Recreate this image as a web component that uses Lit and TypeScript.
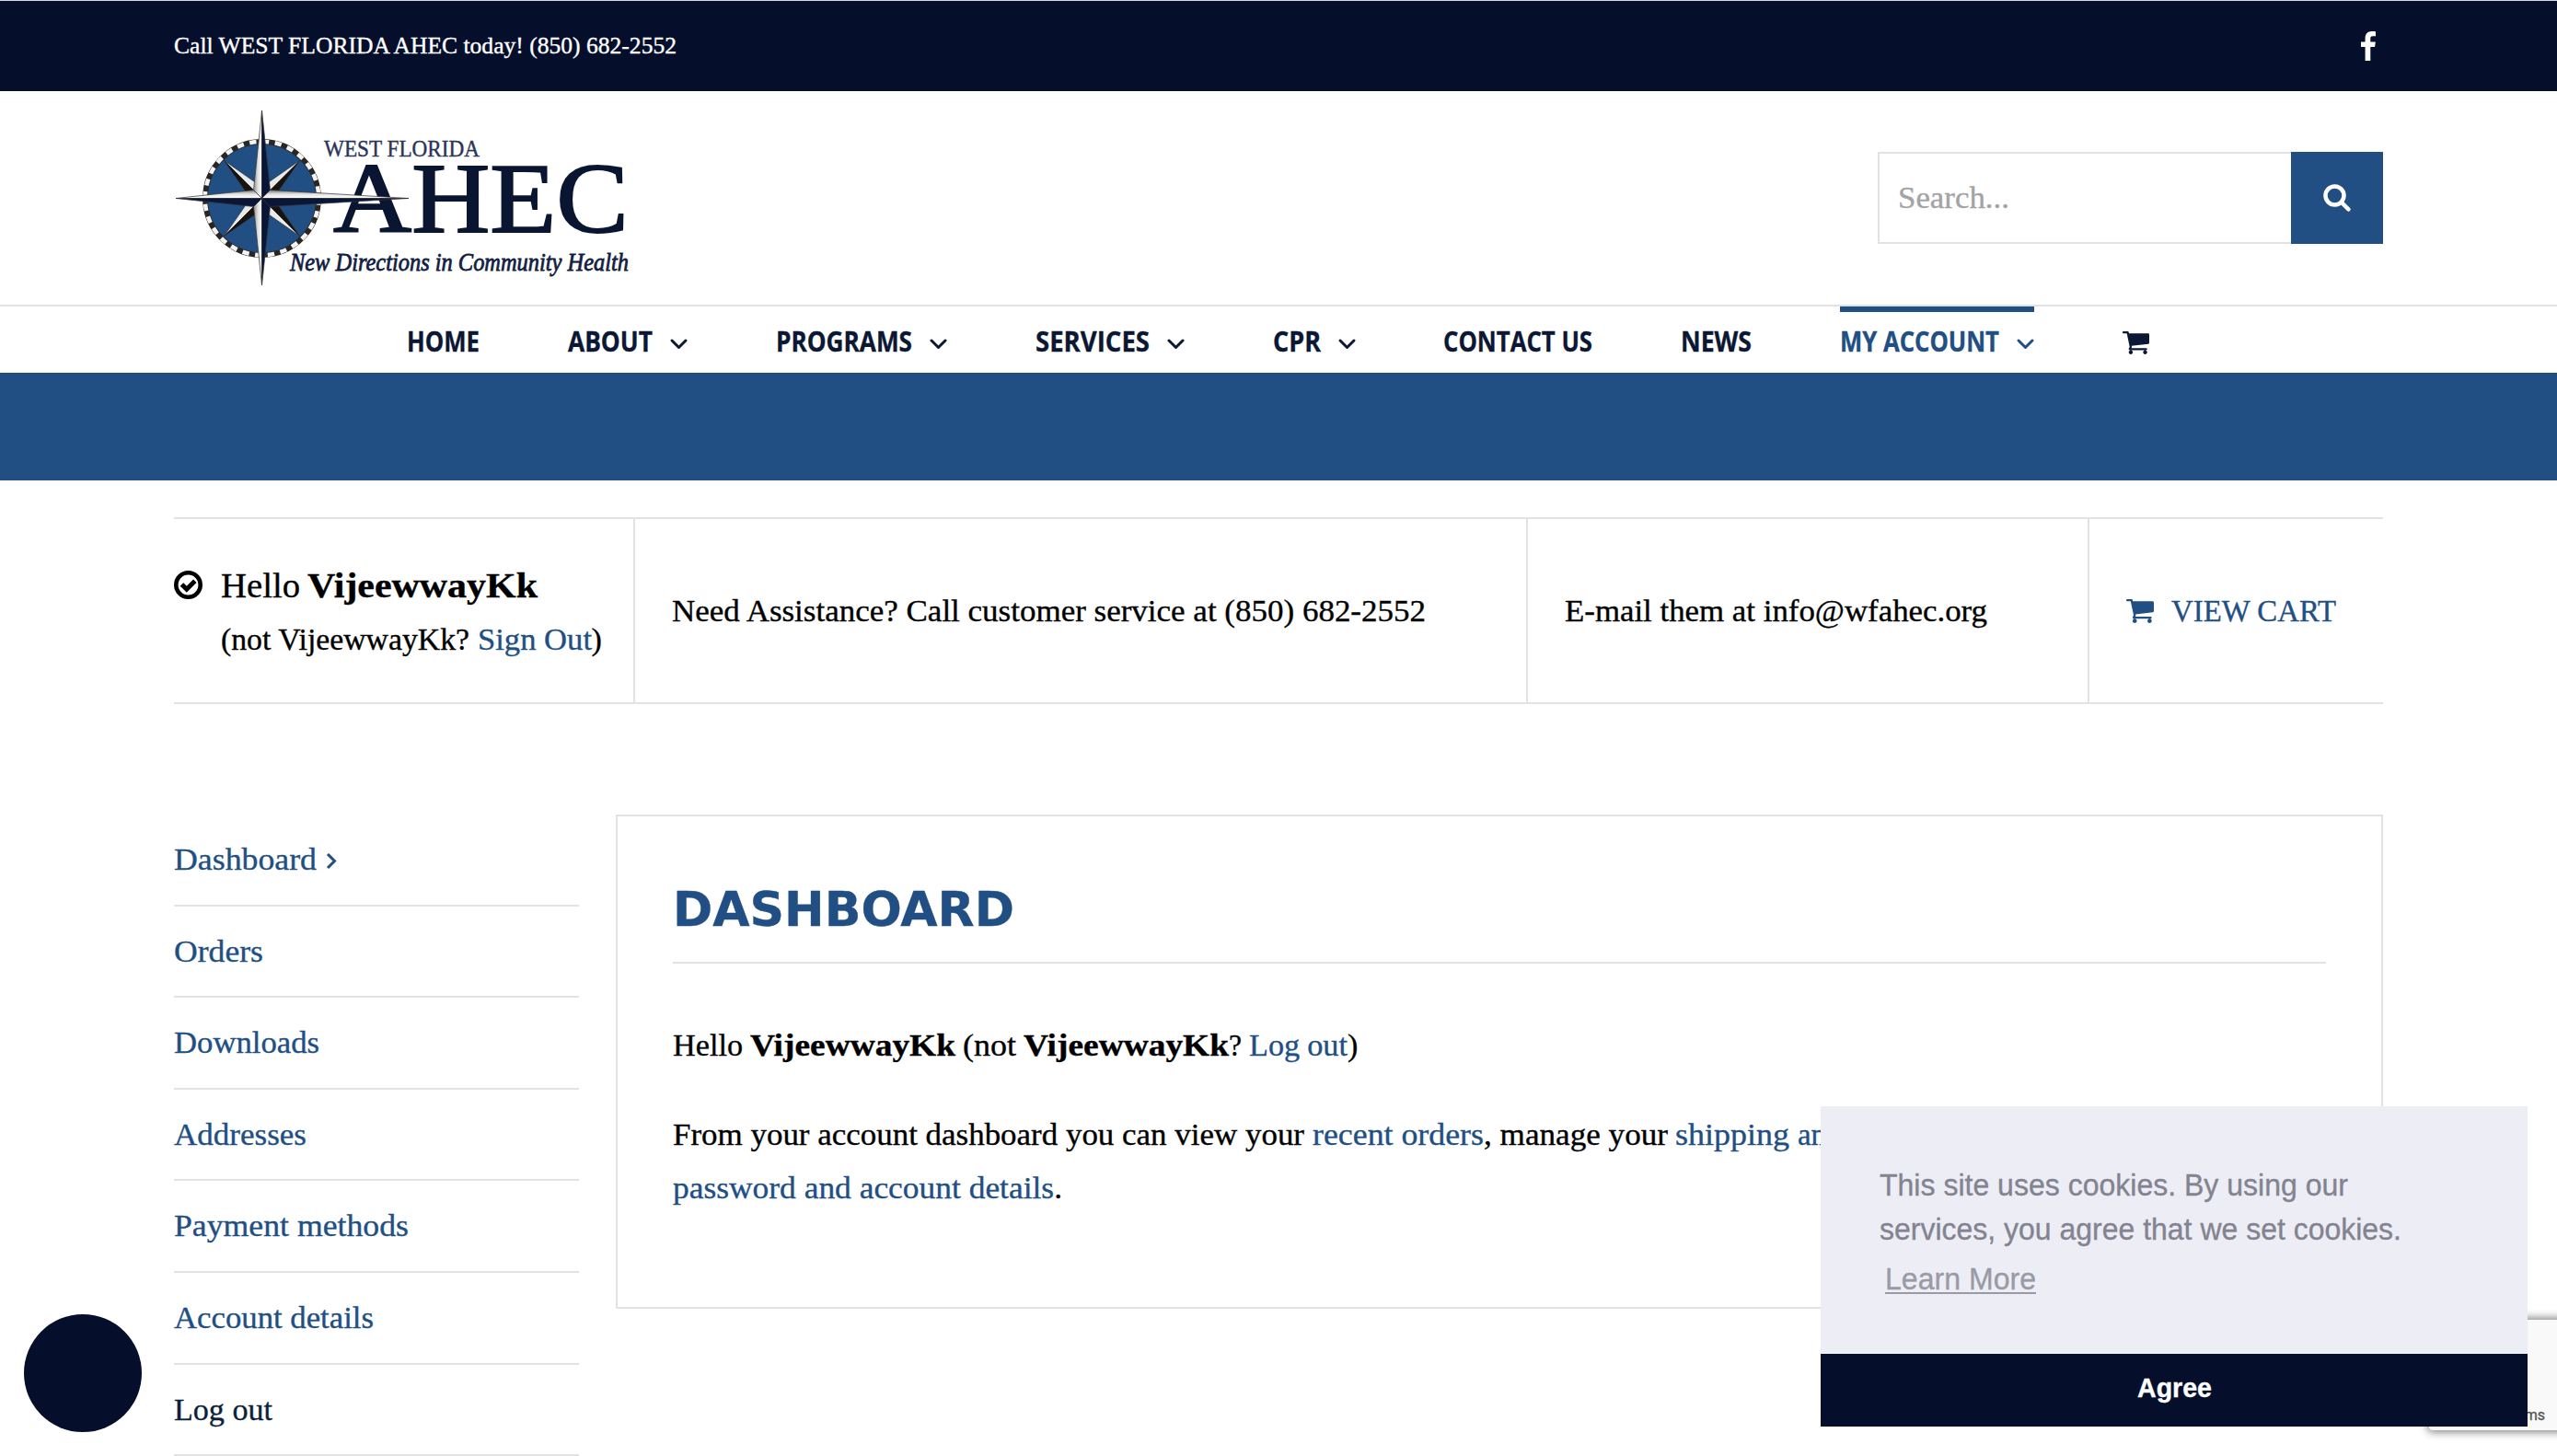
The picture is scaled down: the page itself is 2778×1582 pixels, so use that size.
import { LitElement, html, css, svg } from "lit";
import { customElement, property, state } from "lit/decorators.js";

const CHEVRON = svg`<path d="M2 2 L9.5 9.5 L17 2" fill="none" stroke="currentColor" stroke-width="3" stroke-linecap="round" stroke-linejoin="round"/>`;
const CART = svg`<path fill="currentColor" d="M704 1536q0 52-38 90t-90 38-90-38-38-90 38-90 90-38 90 38 38 90zm896 0q0 52-38 90t-90 38-90-38-38-90 38-90 90-38 90 38 38 90zm128-1088v512q0 24-16.500 42.500t-40.500 21.500l-1044 122q13 60 13 70 0 16-24 64h920q26 0 45 19t19 45-19 45-45 19h-1024q-26 0-45-19t-19-45q0-11 8-31.500t16-36 21.500-40 15.500-29.500l-177-823h-204q-26 0-45-19t-19-45 19-45 45-19h256q16 0 28.500 6.500t19.500 15.500 13 24.500 8 26 5.500 29.500 4.500 26h1201q26 0 45 19t19 45z"/>`;

/** Inline text run stretched horizontally to a given pixel width. */
@customElement("fit-text")
export class FitText extends LitElement {
  static styles = css`
    :host { display: inline-block; white-space: nowrap; }
    .run { display: inline-block; transform-origin: 0 50%; }
  `;
  @property({ type: Number }) w = 100;
  @state() private natural = 0;
  firstUpdated() {
    const el = this.renderRoot.querySelector(".run") as HTMLElement;
    this.natural = el.getBoundingClientRect().width;
  }
  render() {
    const s = this.natural ? this.w / this.natural : 1;
    return html`<span class="run" style=${`transform:scaleX(${s});margin-right:${this.natural ? this.w - this.natural : 0}px`}><slot></slot></span>`;
  }
}

const NAV = [
  { t: "HOME", w: 79 },
  { t: "ABOUT", w: 92, sub: true },
  { t: "PROGRAMS", w: 148, sub: true },
  { t: "SERVICES", w: 124, sub: true },
  { t: "CPR", w: 52, sub: true },
  { t: "CONTACT US", w: 162 },
  { t: "NEWS", w: 77 },
  { t: "MY ACCOUNT", w: 173, sub: true, on: true },
];

const SIDE = [
  { t: "Dashboard", w: 155, on: true },
  { t: "Orders", w: 97 },
  { t: "Downloads", w: 158 },
  { t: "Addresses", w: 144 },
  { t: "Payment methods", w: 255 },
  { t: "Account details", w: 217 },
  { t: "Log out", w: 107, dark: true },
];

@customElement("app-root")
export class AppRoot extends LitElement {
  static styles = css`
    :host {
      display: block; height: 1582px; overflow: hidden; position: relative; background: #fff;
      font-family: "Liberation Serif", "Times New Roman", serif; font-size: 34px; line-height: 58px; color: #000;
      -webkit-text-stroke: 0.35px currentColor;
    }
    * { box-sizing: border-box; }
    svg { display: block; overflow: visible; -webkit-text-stroke: 0; }
    a { color: #214f84; -webkit-text-stroke-color: #214f84; text-decoration: none; }
    .wrap { width: 2400px; margin: 0 auto; }
    .top { border-top: 1px solid #d9dade; background: #050f2c; color: #fff; height: 99px; font-size: 25.4px; }
    .top .wrap { display: flex; align-items: center; justify-content: space-between; height: 98px; }
    .call { padding-bottom: 2px; }
    .fb { padding-right: 8px; }
    .head { height: 234px; border-bottom: 2px solid #e2e2e2; }
    .head .wrap { height: 232px; display: flex; align-items: center; justify-content: space-between; }
    .logo { padding-top: 8px; }
    .search { display: flex; width: 549px; height: 100px; }
    .field { flex: 1; border: 2px solid #e2e2e2; border-right: 0; padding: 19px 0 0 20px; color: #a3a3a5; }
    .go { width: 100px; background: #214f84; display: grid; place-items: center; }
    .nav { height: 72px; display: flex; gap: 95.900px; padding-left: 442px; color: #0b1733;
      font-family: "Open Sans", "Noto Sans", sans-serif; font-weight: 700; font-size: 31px; line-height: 63px; }
    .item { display: flex; gap: 19px; border-top: 6px solid transparent; }
    .item.on { border-color: #214f84; color: #214f84; }
    .item .chev { margin-top: 29px; }
    .item.cart { padding-top: 21px; }
    .band { height: 117px; background: #214f84; }
    .user { margin-top: 40px; height: 203px; border-top: 2px solid #e2e2e2; border-bottom: 2px solid #e2e2e2; display: flex; }
    .cell { display: flex; align-items: center; padding-left: 40px; border-left: 2px solid #e2e2e2; }
    .cell.hi { width: 499px; padding: 0; border: 0; align-items: flex-start; }
    .hi .ok { padding-top: 56px; width: 51px; }
    .hi .who { padding-top: 43px; }
    .big { font-size: 38px; line-height: 59px; word-spacing: -2px; }
    .help { width: 970px; } .mail { width: 610px; } .view { gap: 19px; color: #214f84; }
    .main { margin-top: 120px; display: flex; justify-content: space-between; align-items: flex-start; }
    .side { width: 440px; }
    .row { height: 99.600px; border-bottom: 2px solid #e2e2e2; padding-top: 20px; display: flex; color: #214f84; gap: 10px; }
    .row.dark { color: #0b1f3c; }
    .row .arr { margin-top: 21px; }
    .card { width: 1920px; height: 537px; border: 2px solid #e2e2e2; padding: 0 60px; }
    .title { margin: 54px 0 0; height: 106px; border-bottom: 2px solid #e2e2e2; color: #214f84;
      font-family: "DejaVu Sans", Verdana, sans-serif; font-weight: 700; font-size: 52px; line-height: 95px; }
    .para { margin: 0; padding-top: 60px; white-space: nowrap; word-spacing: -0.5px; }
    .para + .para { padding-top: 39px; word-spacing: 0; }
    .dot { position: absolute; left: 26px; top: 1428px; width: 128px; height: 128px; border-radius: 50%; background: #050f2c; }
    .captcha { position: absolute; left: 2639px; top: 1434px; width: 512px; height: 120px; background: #f9f9f9; border-radius: 4px;
      box-shadow: 0 0 10px 2px gray; font: 16px/20px Roboto, sans-serif; color: #555; padding: 94px 0 0 17px; }
    .cookie { position: absolute; left: 1978px; top: 1202px; width: 768px; height: 348px; background: #edeef5; display: flex; flex-direction: column;
      font-family: "Liberation Sans", Arial, sans-serif; font-size: 32.500px; line-height: 48px; color: #838391; -webkit-text-stroke-color: #838391; }
    .msg { height: 269px; padding: 62px 0 0 64px; }
    .more { margin: 6px 0 0 6px; color: #9a9aa6; -webkit-text-stroke-color: #9a9aa6; display: block; }
    .more u { text-decoration: underline; text-decoration-thickness: 2px; text-underline-offset: 3px; text-decoration-skip-ink: none; }
    .agree { height: 79px; background: #050f2c; color: #fff; -webkit-text-stroke-color: #fff; font-weight: 700; font-size: 29px; display: flex; justify-content: center; line-height: 74px; }
  `;

  private logo() {
    const cx = 95.5, cy = 96.5;
    const diag = [45, 135, 225, 315].map((a) => svg`
      <g transform="rotate(${a} ${cx} ${cy})" stroke="#2a2a2a" stroke-width=".6">
        <path d="M${cx} ${cy - 58} L${cx + 7.5} ${cy - 16} L${cx} ${cy} Z" fill=${a === 45 ? "#17130f" : "#e9e9e9"}/>
        <path d="M${cx} ${cy - 58} L${cx - 7.5} ${cy - 16} L${cx} ${cy} Z" fill=${a === 45 ? "#e9e9e9" : "#17130f"}/>
      </g>`);
    return html`<svg class="logo" width="500" height="208" viewBox="0 0 500 200">
      <defs>
        <linearGradient id="gl" x1="0" x2="1" y1="0" y2="0"><stop offset="0" stop-color="#8a8a8a"/><stop offset=".5" stop-color="#ddd"/><stop offset="1" stop-color="#fff"/></linearGradient>
        <linearGradient id="gt" x1="0" x2="0" y1="0" y2="1"><stop offset="0" stop-color="#777"/><stop offset=".5" stop-color="#e4e4e4"/><stop offset="1" stop-color="#fff"/></linearGradient>
      </defs>
      <g fill="#0a1631" font-family="Liberation Serif, serif">
        <text x="163" y="51" font-size="24.500" textLength="169" lengthAdjust="spacingAndGlyphs" fill="#2a3557" stroke="#2a3557" stroke-width=".4">WEST FLORIDA</text>
        <text x="173" y="133" font-size="108" textLength="321" lengthAdjust="spacingAndGlyphs" stroke="#0a1631" stroke-width="1.800">AHEC</text>
      </g>
      <circle cx=${cx} cy=${cy} r="61.500" fill="#214f84" stroke="#2a2723" stroke-width="5.800"/>
      <circle cx=${cx} cy=${cy} r="61.800" fill="none" stroke="#f4f4f4" stroke-width="4.600" stroke-dasharray="7.300 6.568"/>
      ${diag}
      <g stroke="#333" stroke-width=".7">
        <path d="M${cx} 1 L${cx - 9} ${cy - 9} L${cx} ${cy} Z" fill="url(#gl)"/>
        <path d="M${cx} 1 L${cx + 9} ${cy - 9} L${cx} ${cy} Z" fill="#0a1638"/>
        <path d="M${cx} 191 L${cx - 9} ${cy + 9} L${cx} ${cy} Z" fill="url(#gl)"/>
        <path d="M${cx} 191 L${cx + 9} ${cy + 9} L${cx} ${cy} Z" fill="#0a1638"/>
        <path d="M2 ${cy} L${cx - 9} ${cy - 9} L${cx} ${cy} Z" fill="url(#gt)"/>
        <path d="M2 ${cy} L${cx - 9} ${cy + 9} L${cx} ${cy} Z" fill="#0a1638"/>
        <path d="M255 ${cy} L${cx + 9} ${cy - 9} L${cx} ${cy} Z" fill="url(#gt)"/>
        <path d="M255 ${cy} L${cx + 9} ${cy + 9} L${cx} ${cy} Z" fill="#0a1638"/>
      </g>
      <text x="126" y="175" font-family="Liberation Serif, serif" font-style="italic" font-size="28" textLength="368" lengthAdjust="spacingAndGlyphs" fill="#111d42" stroke="#111d42" stroke-width=".8">New Directions in Community Health</text>
    </svg>`;
  }

  render() {
    return html`
      <div class="top"><div class="wrap">
        <fit-text class="call" w="546">Call WEST FLORIDA AHEC today! (850) 682-2552</fit-text>
        <svg class="fb" width="24" height="32" viewBox="0 0 16 32"><path fill="#fff" d="M16 .3v5h-3c-2.300 0-2.700 1.100-2.700 2.700v3.500h5.500l-.7 5.600h-4.800V32H4.600V17.100H0v-5.600h4.600v-4C4.600 2.700 7.500 0 11.800 0c2 0 3.700.2 4.200.3z"/></svg>
      </div></div>
      <div class="head"><div class="wrap">
        ${this.logo()}
        <div class="search">
          <div class="field"><fit-text w="121">Search...</fit-text></div>
          <div class="go"><svg width="30" height="30" viewBox="0 0 30 30" fill="none" stroke="#fff" stroke-width="4.500" stroke-linecap="round"><circle cx="12.500" cy="12.500" r="10"/><path d="M20 20l7.500 7.500"/></svg></div>
        </div>
      </div></div>
      <div class="nav">
        ${NAV.map((n) => html`<div class="item ${n.on ? "on" : ""}"><fit-text w=${n.w}>${n.t}</fit-text>${n.sub ? html`<svg class="chev" width="19" height="12" viewBox="0 0 19 12">${CHEVRON}</svg>` : ""}</div>`)}
        <div class="item cart"><svg width="29" height="25" viewBox="64 256 1664 1408" preserveAspectRatio="none">${CART}</svg></div>
      </div>
      <div class="band"></div>
      <div class="wrap user">
        <div class="cell hi">
          <div class="ok"><svg width="31" height="31" viewBox="0 0 31 31"><circle cx="15.500" cy="15.500" r="13.200" fill="none" stroke="#000" stroke-width="4.600"/><path d="M8.500 15l5.300 5.300 9-9" fill="none" stroke="#000" stroke-width="5"/></svg></div>
          <div class="who">
            <div class="big"><fit-text w="86">Hello</fit-text> <b><fit-text w="250">VijeewwayKk</fit-text></b></div>
            <div><fit-text w="270">(not VijeewwayKk?</fit-text> <a><fit-text w="124">Sign Out</fit-text></a>)</div>
          </div>
        </div>
        <div class="cell help"><fit-text w="819">Need Assistance? Call customer service at (850) 682-2552</fit-text></div>
        <div class="cell mail"><fit-text w="459">E-mail them at info@wfahec.org</fit-text></div>
        <div class="cell view"><svg width="30" height="26" viewBox="64 256 1664 1408" preserveAspectRatio="none">${CART}</svg><fit-text w="179">VIEW CART</fit-text></div>
      </div>
      <div class="wrap main">
        <div class="side">
          ${SIDE.map((s) => html`<div class="row ${s.dark ? "dark" : ""}"><fit-text w=${s.w}>${s.t}</fit-text>${s.on ? html`<svg class="arr" width="12" height="19" viewBox="0 0 12 19"><path d="M2 2l7.500 7.500L2 17" fill="none" stroke="currentColor" stroke-width="3"/></svg>` : ""}</div>`)}
        </div>
        <div class="card">
          <h2 class="title"><fit-text w="371">DASHBOARD</fit-text></h2>
          <p class="para"><fit-text w="76">Hello</fit-text> <b><fit-text w="223">VijeewwayKk</fit-text></b> <fit-text w="58">(not</fit-text> <b><fit-text w="223">VijeewwayKk</fit-text></b><fit-text w="14">?</fit-text> <a><fit-text w="107">Log out</fit-text></a>)</p>
          <p class="para"><fit-text w="686">From your account dashboard you can view your</fit-text> <a><fit-text w="186">recent orders</fit-text></a><fit-text w="200">, manage your</fit-text> <a><fit-text w="124">shipping</fit-text></a> <fit-text w="340"><a>and billing addresses</a>, and</fit-text><br>
          <fit-text w="423"><a>password and account details</a>.</fit-text></p>
        </div>
      </div>
      <div class="dot"></div>
      <div class="captcha"><fit-text w="109">Privacy - Terms</fit-text></div>
      <div class="cookie">
        <div class="msg">
          <fit-text w="509">This site uses cookies. By using our</fit-text><br>
          <fit-text w="567">services, you agree that we set cookies.</fit-text>
          <a class="more"><fit-text w="164"><u>Learn More</u></fit-text></a>
        </div>
        <div class="agree"><fit-text w="81">Agree</fit-text></div>
      </div>`;
  }
}
